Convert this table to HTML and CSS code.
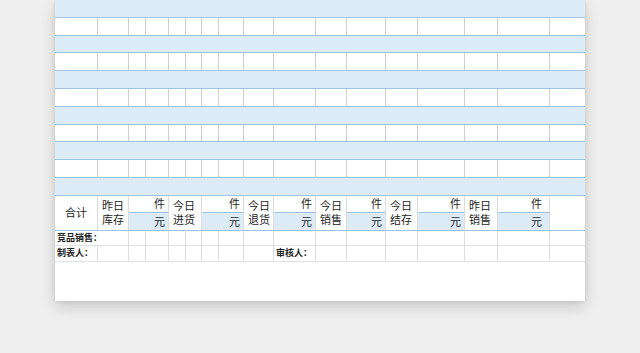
FILE: index.html
```html
<!DOCTYPE html>
<html lang="zh-CN">
<head>
<meta charset="utf-8">
<title>库存日报表</title>
<link rel="stylesheet" href="styles.css">
</head>
<body>
<div class="sheet">
  <div class="paper">
    <div class="row band"></div>
    <div class="row cols lined"><span></span><span></span><span></span><span></span><span></span><span></span><span></span><span></span><span></span><span></span><span></span><span></span><span></span><span></span><span></span><span></span><span></span></div>
    <div class="row band"></div>
    <div class="row cols lined"><span></span><span></span><span></span><span></span><span></span><span></span><span></span><span></span><span></span><span></span><span></span><span></span><span></span><span></span><span></span><span></span><span></span></div>
    <div class="row band"></div>
    <div class="row cols lined"><span></span><span></span><span></span><span></span><span></span><span></span><span></span><span></span><span></span><span></span><span></span><span></span><span></span><span></span><span></span><span></span><span></span></div>
    <div class="row band"></div>
    <div class="row cols lined"><span></span><span></span><span></span><span></span><span></span><span></span><span></span><span></span><span></span><span></span><span></span><span></span><span></span><span></span><span></span><span></span><span></span></div>
    <div class="row band"></div>
    <div class="row cols lined"><span></span><span></span><span></span><span></span><span></span><span></span><span></span><span></span><span></span><span></span><span></span><span></span><span></span><span></span><span></span><span></span><span></span></div>
    <div class="row band"></div>

    <div class="summary cols">
      <div class="cell total">合计</div>
      <div class="cell label c2"><span>昨日</span><span>库存</span></div>
      <div class="cell qty c3-4">件</div>
      <div class="cell amt c3-4">元</div>
      <div class="cell label c5-6"><span>今日</span><span>进货</span></div>
      <div class="cell qty c7-8">件</div>
      <div class="cell amt c7-8">元</div>
      <div class="cell label c9"><span>今日</span><span>退货</span></div>
      <div class="cell qty c10">件</div>
      <div class="cell amt c10">元</div>
      <div class="cell label c11"><span>今日</span><span>销售</span></div>
      <div class="cell qty c12">件</div>
      <div class="cell amt c12">元</div>
      <div class="cell label c13"><span>今日</span><span>结存</span></div>
      <div class="cell qty c14">件</div>
      <div class="cell amt c14">元</div>
      <div class="cell label c15"><span>昨日</span><span>销售</span></div>
      <div class="cell qty c16 wide">件</div>
      <div class="cell amt c16 wide">元</div>
      <div class="cell blank c17"></div>
    </div>

    <div class="foot cols">
      <span class="note span2">竞品销售：</span><span></span><span></span><span></span><span></span><span></span><span></span><span></span><span></span><span></span><span></span><span></span><span></span><span></span><span></span><span></span>
    </div>
    <div class="foot cols">
      <span class="note">制表人：</span><span></span><span></span><span></span><span></span><span></span><span></span><span></span><span></span><span class="note">审核人：</span><span></span><span></span><span></span><span></span><span></span><span></span><span></span>
    </div>
  </div>
</div>
</body>
</html>
```

FILE: styles.css
```css
html, body {
  margin: 0;
  padding: 0;
}

body {
  background: #efefef;
  font-family: "Noto Sans CJK SC", "Noto Sans", sans-serif;
  color: #262626;
}

.sheet {
  height: 353px;
  padding-left: 55px;
  overflow: hidden;
}

.paper {
  width: 530px;
  height: 301px;
  background: #ffffff;
  box-shadow: 0 6px 14px rgba(0, 0, 0, 0.16), 0 0 4px rgba(0, 0, 0, 0.1);
}

.cols {
  display: grid;
  grid-template-columns: 43px 31px 17px 23px 17px 16px 17px 25px 30px 42px 31px 39px 32px 47px 33px 52px 35px;
}

.row {
  height: 17.8px;
  box-sizing: border-box;
  border-bottom: 1px solid #9dc3e6;
}

.band {
  background: #ddebf7;
}

.lined > span {
  border-right: 1px solid #d0d0d0;
}

.lined > span:last-child,
.foot > span:last-child {
  border-right: 0;
}

/* summary */
.summary {
  grid-template-rows: 17px 17px;
  border-bottom: 1px solid #9dc3e6;
  font-size: 11px;
}

.cell {
  box-sizing: border-box;
  border-right: 1px solid #dcdcdc;
  display: flex;
  align-items: center;
  white-space: nowrap;
  line-height: 13px;
}

.total {
  grid-column: 1;
  grid-row: 1 / 3;
  justify-content: center;
}

.label {
  grid-row: 1 / 3;
  flex-direction: column;
  align-items: flex-start;
  justify-content: center;
  gap: 1px;
  padding-left: 4px;
}

.qty {
  grid-row: 1;
  justify-content: flex-end;
  padding-right: 3px;
  border-bottom: 1px solid #9dc3e6;
}

.amt {
  grid-row: 2;
  justify-content: flex-end;
  padding-right: 3px;
  background: #ddebf7;
}

.qty.wide,
.amt.wide {
  padding-right: 7px;
}

.blank {
  grid-row: 1 / 3;
  border-right: 0;
}

.c2 { grid-column: 2; }
.c3-4 { grid-column: 3 / 5; }
.c5-6 { grid-column: 5 / 7; }
.c7-8 { grid-column: 7 / 9; }
.c9 { grid-column: 9; }
.c10 { grid-column: 10; }
.c11 { grid-column: 11; }
.c12 { grid-column: 12; }
.c13 { grid-column: 13; }
.c14 { grid-column: 14; }
.c15 { grid-column: 15; }
.c16 { grid-column: 16; }
.c17 { grid-column: 17; }

/* footer rows */
.foot {
  height: 15.5px;
  box-sizing: border-box;
  border-bottom: 1px solid #e2e2e2;
}

.foot > span {
  border-right: 1px solid #dedede;
}

.note {
  padding-left: 2px;
  font-size: 9px;
  font-weight: bold;
  line-height: 14.5px;
  white-space: nowrap;
  color: #222;
}

.span2 {
  grid-column: span 2;
}
```
